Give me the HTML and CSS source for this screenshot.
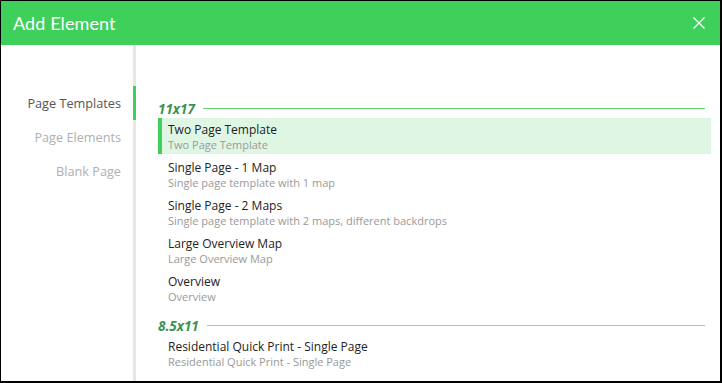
FILE: index.html
```html
<!DOCTYPE html>
<html>
<head>
<meta charset="utf-8">
<link rel="stylesheet" href="styles.css">
</head>
<body>
<div class="dialog">
  <div class="header">
    <div class="title">Add Element</div>
    <svg class="close" width="12" height="12" viewBox="0 0 12 12"><path d="M0.5 0.5L11.5 11.5M11.5 0.5L0.5 11.5" stroke="#fff" stroke-width="1.2" fill="none"/></svg>
  </div>
  <div class="body">
    <div class="sidebar">
      <div class="tab active">Page Templates</div>
      <div class="tab">Page Elements</div>
      <div class="tab">Blank Page</div>
    </div>
    <div class="content">
      <div class="section">
        <div class="section-head"><span class="section-name">11x17</span><span class="rule"></span></div>
        <div class="item selected"><div class="name">Two Page Template</div><div class="desc">Two Page Template</div></div>
        <div class="item"><div class="name">Single Page - 1 Map</div><div class="desc">Single page template with 1 map</div></div>
        <div class="item"><div class="name">Single Page - 2 Maps</div><div class="desc">Single page template with 2 maps, different backdrops</div></div>
        <div class="item"><div class="name">Large Overview Map</div><div class="desc">Large Overview Map</div></div>
        <div class="item"><div class="name">Overview</div><div class="desc">Overview</div></div>
      </div>
      <div class="section second">
        <div class="section-head"><span class="section-name">8.5x11</span><span class="rule"></span></div>
        <div class="item"><div class="name">Residential Quick Print - Single Page</div><div class="desc">Residential Quick Print - Single Page</div></div>
      </div>
    </div>
  </div>
</div>
</body>
</html>
```
FILE: styles.css
```css
* { box-sizing: border-box; }
html, body { margin: 0; padding: 0; background: #fff; }
body { font-family: "Open Sans", "Noto Sans", sans-serif; }
.dialog {
  width: 722px;
  height: 383px;
  border-style: solid;
  border-color: #000;
  border-width: 1px 2px 2px 1px;
  display: flex;
  flex-direction: column;
  overflow: hidden;
}
.header {
  height: 44px;
  flex: none;
  background: #3fcf5b;
  display: flex;
  align-items: center;
  justify-content: space-between;
  padding: 0 15px 0 12px;
}
.title {
  color: #fff;
  font-family: "Lato", "Open Sans", sans-serif;
  font-size: 18px;
  letter-spacing: 0.1px;
  margin-top: -1px;
}
.close { display: block; margin-top: 0; }
.body {
  flex: 1;
  display: flex;
  min-height: 0;
}
.sidebar {
  width: 135px;
  flex: none;
  border-right: 3px solid #e6e6e6;
  padding-top: 41px;
}
.tab {
  height: 34px;
  line-height: 34px;
  text-align: right;
  padding-right: 12px;
  font-size: 12.7px;
  color: #b0b0b0;
  margin-right: -3px;
  border-right: 3px solid transparent;
}
.tab.active {
  color: #555;
  border-right-color: #3fcf5b;
}
.content {
  flex: 1;
  padding: 52px 9px 0 22px;
}
.section-head {
  height: 21px;
  display: flex;
  align-items: center;
  padding: 2px 6px 0 0;
}
.section-name {
  color: #3b9150;
  font-weight: bold;
  font-style: italic;
  font-size: 13.5px;
  margin-right: 8px;
}
.rule {
  flex: 1;
  height: 1px;
  background: #5fd872;
}
.second .rule { background: #86d894; }
.second { margin-top: 8px; }
.item {
  height: 36px;
  margin-bottom: 2px;
  padding: 4px 0 0 6px;
  border-left: 4px solid transparent;
}
.item.selected {
  background: #e0f6e5;
  border-left-color: #3fcf5b;
}
.name {
  font-size: 12px;
  line-height: 15px;
  color: #222;
}
.desc {
  font-size: 11px;
  line-height: 15px;
  color: #999;
}
```
